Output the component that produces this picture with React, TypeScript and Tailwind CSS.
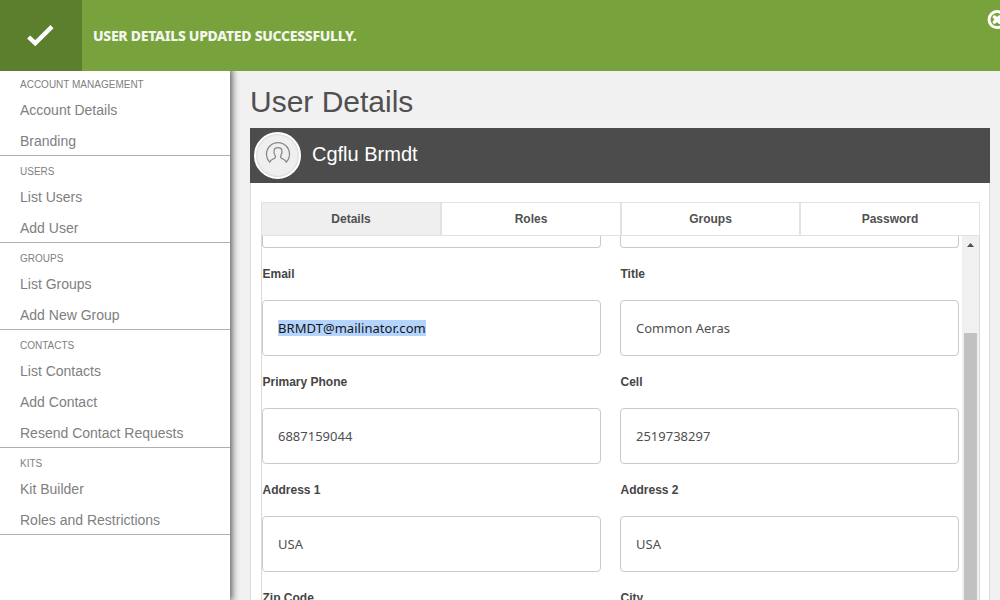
const menu = [
  { title: 'ACCOUNT MANAGEMENT', items: ['Account Details', 'Branding'] },
  { title: 'USERS', items: ['List Users', 'Add User'] },
  { title: 'GROUPS', items: ['List Groups', 'Add New Group'] },
  { title: 'CONTACTS', items: ['List Contacts', 'Add Contact', 'Resend Contact Requests'] },
  { title: 'KITS', items: ['Kit Builder', 'Roles and Restrictions'] },
];

const tabs = ['Details', 'Roles', 'Groups', 'Password'];

const fields = [
  { label: 'Email', value: 'BRMDT@mailinator.com', selected: true },
  { label: 'Title', value: 'Common Aeras' },
  { label: 'Primary Phone', value: '6887159044' },
  { label: 'Cell', value: '2519738297' },
  { label: 'Address 1', value: 'USA' },
  { label: 'Address 2', value: 'USA' },
  { label: 'Zip Code', value: '' },
  { label: 'City', value: '' },
];

function Banner() {
  return (
    <header className="relative z-20 flex h-[71px] shrink-0 bg-[#78a23c]">
      <div className="flex w-[82px] items-center justify-center bg-[#5b7f2d]">
        <svg width="28" height="24" viewBox="0 0 28 24" fill="none" stroke="#fff" strokeWidth="4.4">
          <path d="M1.6 13 L8.2 19.2 L25 2.6" />
        </svg>
      </div>
      <p className="flex grow items-center pl-[11px] font-['Noto_Sans',sans-serif] text-[14px] font-extrabold tracking-[-0.29px] text-[#f4f7ee]">
        USER DETAILS UPDATED SUCCESSFULLY.
      </p>
      <svg className="-mr-[7px] mt-[10px] shrink-0" width="20" height="20" viewBox="0 0 20 20" fill="none" stroke="#fff">
        <circle cx="10" cy="9.6" r="8" strokeWidth="3" />
        <path d="M7.5 7.1 L12.5 12.1 M12.5 7.1 L7.5 12.1" strokeWidth="3.6" strokeLinecap="round" />
      </svg>
    </header>
  );
}

function Sidebar() {
  return (
    <nav className="z-10 -mt-[2px] w-[230px] shrink-0 bg-white shadow-[1px_0_7px_1px_rgba(0,0,0,0.65)]">
      {menu.map((section) => (
        <section key={section.title} className="border-b border-[#b0b0b0] pl-5 text-[#808080]">
          <h2 className="h-[25px] pt-[2px] text-[10px] leading-[28px]">{section.title}</h2>
          <ul className="-mb-px">
            {section.items.map((item) => (
              <li key={item} className="h-[31px] text-[14px] leading-[32px]">
                {item}
              </li>
            ))}
          </ul>
        </section>
      ))}
    </nav>
  );
}

function Avatar() {
  return (
    <div className="flex size-[47px] items-center justify-center rounded-full border-2 border-white bg-[#efefef] shadow-[inset_0_0_2px_rgba(0,0,0,0.25)]">
      <svg className="-mt-[3px]" width="26" height="24" viewBox="0 0 26 24" fill="none" stroke="#858585" strokeWidth="1.2">
        <path d="M4.8 20.2 A11.5 11.5 0 1 1 21.2 20.2 C20.5 17.6 18.3 17.4 16.4 16.2 C15.2 15.4 15.6 14 16.2 12.8 C17.3 11 17.2 9.6 16.8 7.8 C16.2 4.9 9.8 4.9 9.2 7.8 C8.8 9.6 8.7 11 9.8 12.8 C10.4 14 10.8 15.4 9.6 16.2 C7.7 17.4 5.5 17.6 4.8 20.2 Z" />
      </svg>
    </div>
  );
}

function Tabs() {
  return (
    <div className="grid h-[34px] shrink-0 grid-cols-[180px_180px_179px_1fr] border border-[#e2e2e2]">
      {tabs.map((tab, i) => (
        <button
          key={tab}
          className={`border-[#e2e2e2] text-[12px] font-bold text-[#505050] ${i < 3 ? 'border-r-2' : ''} ${i === 0 ? 'bg-[#efefef]' : 'bg-white'}`}
        >
          {tab}
        </button>
      ))}
    </div>
  );
}

function Form() {
  return (
    <div className="flex min-h-0 grow overflow-hidden border-x border-[#dadada]">
      <form className="grid grow auto-rows-[108px] grid-cols-[339px_339px] grid-rows-[12px] gap-x-[19px]">
        <div className="rounded-b-[4px] border border-t-0 border-[#cacaca]" />
        <div className="rounded-b-[4px] border border-t-0 border-[#cacaca]" />
        {fields.map((field) => (
          <label key={field.label} className="block">
            <span className="block h-[52px] pl-[0.5px] pt-[18px] text-[12px] font-bold leading-[16px] text-[#454545]">{field.label}</span>
            <span className="flex h-[56px] items-center rounded-[4px] border border-[#cacaca] bg-white pl-[15px] font-['Noto_Sans',sans-serif] text-[13px] text-[#505050]">
              <span className={field.selected ? 'bg-[#b3d4fc] leading-[16px] tracking-[0.05px] text-[#151515]' : 'leading-[16px]'}>{field.value}</span>
            </span>
          </label>
        ))}
      </form>
      <div className="flex w-[17px] shrink-0 flex-col items-center bg-[#f0f0f0]">
        <svg className="mt-[7px] shrink-0" width="7" height="4" viewBox="0 0 7 4">
          <path d="M0 4 L3.5 0 L7 4 Z" fill="#505050" />
        </svg>
        <div className="mt-[86px] w-[13px] grow bg-[#c1c1c1]" />
      </div>
    </div>
  );
}

export default function App() {
  return (
    <div className="flex h-[600px] w-[1000px] flex-col overflow-hidden bg-[#f1f1f1] font-['Liberation_Sans',Arial,sans-serif]">
      <Banner />
      <div className="flex min-h-0 grow">
        <Sidebar />
        <main className="flex min-w-0 grow flex-col pl-5 pr-[10px]">
          <h1 className="h-[57px] shrink-0 pt-[11px] text-[30px] leading-[40px] text-[#505050]">User Details</h1>
          <div className="flex h-[55px] shrink-0 items-center bg-[#4c4c4c] pl-1">
            <Avatar />
            <h2 className="-mt-[4px] ml-[11px] text-[20px] text-white">Cgflu Brmdt</h2>
          </div>
          <div className="flex min-h-0 grow flex-col border-x border-[#dadada] bg-white pl-[10px] pr-[9px] pt-[19px]">
            <Tabs />
            <Form />
          </div>
        </main>
      </div>
    </div>
  );
}
